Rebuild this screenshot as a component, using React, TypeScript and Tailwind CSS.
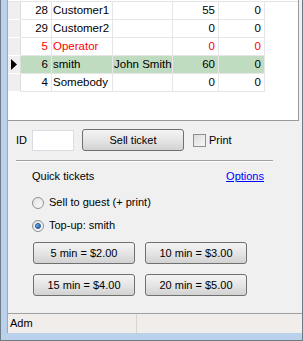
import React from 'react';

type Row = { id: string; name: string; full: string; a: string; b: string; red?: boolean; selected?: boolean };

const ROWS: Row[] = [
    { id: '28', name: 'Customer1', full: '', a: '55', b: '0' },
    { id: '29', name: 'Customer2', full: '', a: '0', b: '0' },
    { id: '5', name: 'Operator', full: '', a: '0', b: '0', red: true },
    { id: '6', name: 'smith', full: 'John Smith', a: '60', b: '0', selected: true },
    { id: '4', name: 'Somebody', full: '', a: '0', b: '0' },
];

const PRICES = ['5 min = $2.00', '10 min = $3.00', '15 min = $4.00', '20 min = $5.00'];

const WinButton: React.FC<{ label: string; className?: string }> = ({ label, className = '' }) => (
    <button
        className={`h-[22px] rounded-[3px] border border-[#707070] bg-gradient-to-b from-[#f3f3f3] via-[#e6e6e6] to-[#d2d2d2] text-[11px] text-black leading-none ${className}`}
    >
        {label}
    </button>
);

const Radio: React.FC<{ checked?: boolean; label: string }> = ({ checked, label }) => (
    <div className="flex items-center gap-[5px] h-[13px]">
        <span className="w-[12px] h-[12px] rounded-full border border-[#8e8f8f] bg-gradient-to-br from-[#e2e2e2] to-[#fbfbfb] flex items-center justify-center">
            {checked && <span className="w-[6px] h-[6px] rounded-full bg-gradient-to-br from-[#7ec1f0] to-[#1b5fae] border border-[#1d4f8a]" />}
        </span>
        <span>{label}</span>
    </div>
);

export default function App() {
    return (
        <div
            className="w-[303px] h-[341px] bg-[#b9d1ea] border-l border-r border-b border-[#6e7a86] pl-[6px] pb-[7px] flex text-[11px] text-black"
            style={{ fontFamily: '"Liberation Sans", Arial, sans-serif' }}
        >
            <div className="flex-1 flex flex-col border-l border-[#a0a8b0] bg-[#f0f0f0]">
                {/* グリッド */}
                <div className="w-[291px] h-[121px] bg-white border-r border-b border-[#9a9a9a] shrink-0 text-[11.5px]">
                    <div className="h-[2px] border-b border-[#e6e6e6]" />
                    {ROWS.map((r) => {
                        const txt = r.red ? 'text-[#ff0000]' : 'text-black';
                        const bg = r.selected ? 'bg-[#c0dcc0]' : 'bg-white';
                        return (
                            <div key={r.id} className="flex h-[18px] leading-[17px]">
                                <div className="w-[13px] bg-[#efefef] border-r border-b border-r-[#dcdcdc] border-b-[#ffffff] flex items-center justify-center">
                                    {r.selected && (
                                        <svg width="7" height="11" viewBox="0 0 7 11">
                                            <path d="M0 0 L6 5.5 L0 11 Z" fill="#000" />
                                        </svg>
                                    )}
                                </div>
                                <div className={`w-[31px] pr-[3px] text-right border-r border-b border-[#e6e6e6] ${bg} ${txt}`}>{r.id}</div>
                                <div className={`w-[61px] pl-[1px] border-r border-b border-[#e6e6e6] ${bg} ${txt}`}>{r.name}</div>
                                <div className={`w-[60px] pl-[1px] border-r border-b border-[#e6e6e6] ${bg} ${txt}`}>{r.full}</div>
                                <div className={`w-[46px] pr-[3px] text-right border-r border-b border-[#e6e6e6] ${bg} ${txt}`}>{r.a}</div>
                                <div className={`w-[46px] pr-[3px] text-right border-r border-b border-[#e6e6e6] ${bg} ${txt}`}>{r.b}</div>
                            </div>
                        );
                    })}
                </div>

                {/* 操作パネル */}
                <div className="flex-1 flex flex-col px-[8px]">
                    <div className="flex items-center mt-[8px] h-[22px]">
                        <span className="w-[16px]">ID</span>
                        <div className="w-[42px] h-[21px] bg-white border border-[#dadce4]" />
                        <WinButton label="Sell ticket" className="ml-[8px] w-[102px]" />
                        <span className="ml-[9px] w-[13px] h-[13px] border border-[#8e8f8f] bg-gradient-to-br from-[#dcdcdc] to-[#f8f8f8]" />
                        <span className="ml-[3px]">Print</span>
                    </div>

                    <div className="mt-[9px] w-[257px] border-t border-[#a0a0a0] border-b border-b-white" />

                    <div className="flex items-center justify-between w-[232px] ml-[16px] mt-[8px] h-[12px]">
                        <span>Quick tickets</span>
                        <span className="text-[#0000ff] underline">Options</span>
                    </div>

                    <div className="ml-[16px] mt-[14px] flex flex-col gap-[10px]">
                        <Radio label="Sell to guest (+ print)" />
                        <Radio checked label="Top-up: smith" />
                    </div>

                    <div className="ml-[17px] mt-[10px] grid grid-cols-[102px_102px] gap-x-[10px] gap-y-[10px] w-max">
                        {PRICES.map((p) => (
                            <WinButton key={p} label={p} className="w-[102px]" />
                        ))}
                    </div>
                </div>

                {/* ステータスバー */}
                <div className="h-[20px] shrink-0 border-t border-[#a0a0a0] bg-[#f0edeb] flex">
                    <div className="w-[129px] pl-[2px] flex items-center border-r border-[#d8d4d0]">Adm</div>
                    <div className="flex-1" />
                </div>
            </div>
        </div>
    );
}
